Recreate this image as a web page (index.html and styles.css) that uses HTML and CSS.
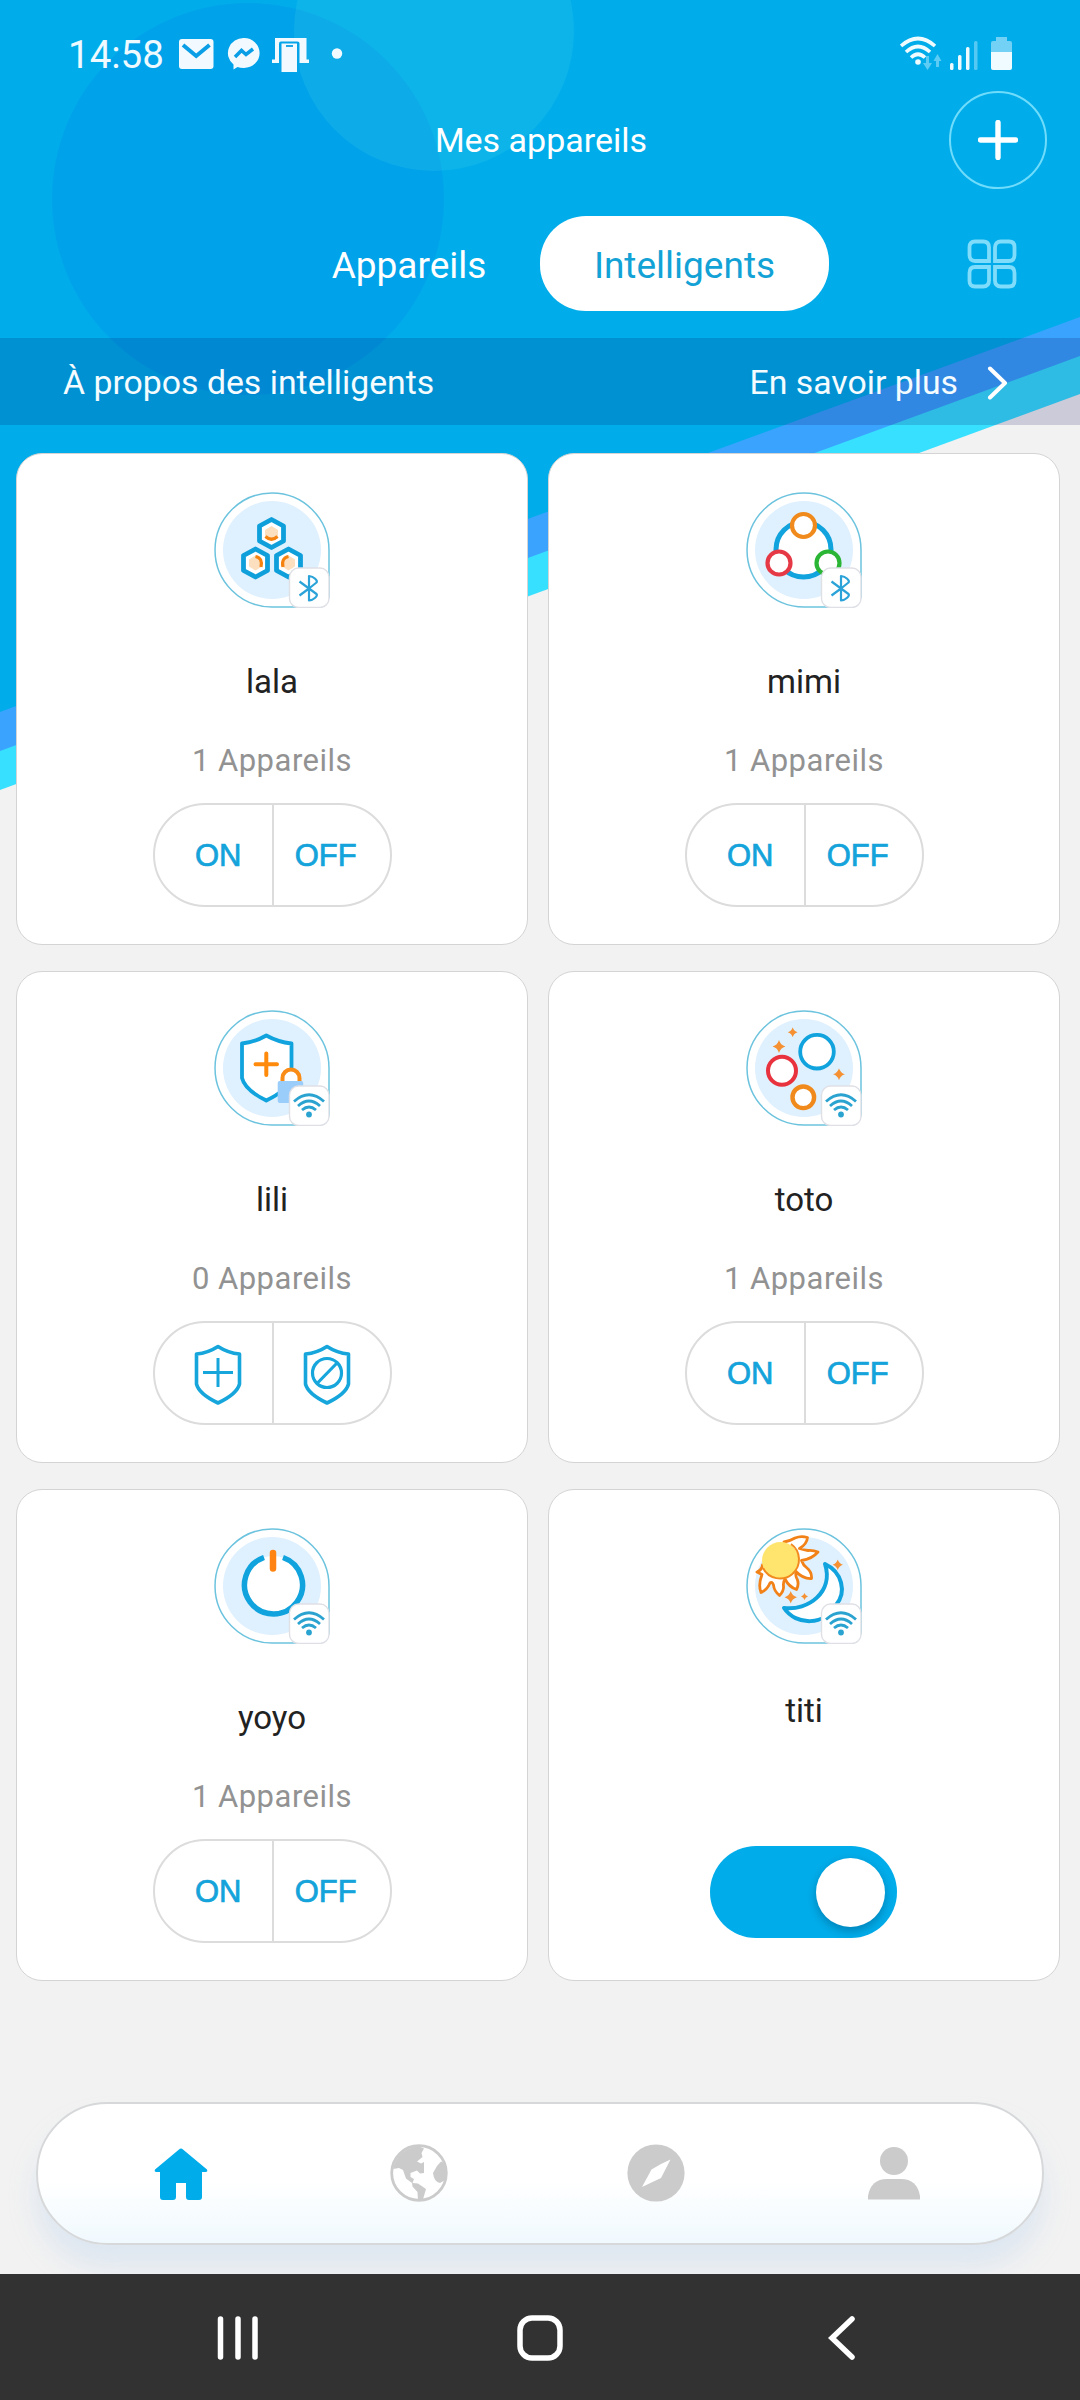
FILE: index.html
```html
<!DOCTYPE html>
<html lang="fr">
<head>
  <meta charset="UTF-8" />
  <meta name="viewport" content="width=device-width, initial-scale=1" />
  <title>Mes appareils</title>
  <link rel="stylesheet" href="styles.css">
</head>
<body>

  <!-- shared icons -->
  <svg class="sprite" aria-hidden="true">
    <symbol id="drop" viewBox="0 0 116 116">
      <path d="M58 1A57 57 0 0 0 58 115H103A12 12 0 0 0 115 103V58A57 57 0 0 0 58 1Z" fill="#fff" stroke="#6cc3de" stroke-width="1.5"/>
      <circle cx="58" cy="58" r="49" fill="#dff0fe"/>
    </symbol>
    <symbol id="badge-bt" viewBox="0 0 116 116">
      <rect x="75.5" y="76" width="39.5" height="39.5" rx="9" fill="#fff" stroke="#dfe0e6" stroke-width="1.4"/>
      <path d="M85.500 89.500L95 96.500L102.500 102C104 104 100 108 95 108.500V84C100 84.500 104 88.500 102.500 90.500L95 96.500L85.500 103.500" fill="none" stroke="#2ba3d8" stroke-width="2.2" stroke-linejoin="round"/>
    </symbol>
    <symbol id="badge-wifi" viewBox="0 0 116 116">
      <rect x="75.5" y="76" width="39.5" height="39.5" rx="9" fill="#fff" stroke="#dfe0e6" stroke-width="1.4"/>
      <g fill="none" stroke="#2ba3d0" stroke-width="2.8">
        <path d="M80 91.500Q95 78 110 91.500"/>
        <path d="M84 96Q95 86 106 96"/>
        <path d="M88 100Q95 94 102 100"/>
      </g>
      <circle cx="95" cy="104.500" r="2.900" fill="#2ba3d0"/>
    </symbol>
    <symbol id="hex" viewBox="-16 -17 32 34">
      <path d="M0-14L12-7.500V7.500L0 14L-12 7.500V-7.500Z" fill="#fff" stroke="#0f9fdb" stroke-width="4.800" stroke-linejoin="round"/>
    </symbol>
    <symbol id="star" viewBox="-6 -6 12 12">
      <path d="M0-6Q1.300-1.300 6 0Q1.300 1.300 0 6Q-1.300 1.300-6 0Q-1.300-1.300 0-6Z" fill="#f59132"/>
    </symbol>
    <symbol id="shield" viewBox="0 0 48 61">
      <path d="M24 2.500Q34 9 45.500 10V40Q43 50 24 59Q5 50 2.500 40V10Q14 9 24 2.500Z" fill="none" stroke="#16a6dc" stroke-width="3.600" stroke-linejoin="round"/>
    </symbol>
  </svg>

  <svg class="backdrop" viewBox="0 0 1080 800" aria-hidden="true">
    <path d="M0 0H1080V394L0 790Z" fill="#38e0ff"/>
    <path d="M0 0H1080V356L0 751Z" fill="#3aa3fe"/>
    <path d="M0 0H1080V317L0 712Z" fill="#00adea"/>
    <circle cx="248" cy="199" r="196" fill="#00a2ea"/>
    <circle cx="434" cy="31" r="140" fill="#2fc6ea" fill-opacity=".27"/>
  </svg>

  <div class="app">
    <header class="header">
      <div class="status-bar">
        <span class="time">14:58</span>
        <svg class="status-left" viewBox="0 0 166 36">
          <g fill="#f2faff">
            <rect x="0" y="2" width="34.500" height="30" rx="3"/>
            <path d="M4 8L17.200 19L30.500 8" fill="none" stroke="#0a9ee6" stroke-width="4"/>
            <path d="M65 1A15.600 15 0 0 1 65 31Q61 31 58.500 30L54.500 32.500V27.500A15.600 15 0 0 1 65 1Z"/>
            <path d="M56 20L62.500 13.500L67 17.500L74 12" fill="none" stroke="#0a9ee6" stroke-width="3.500"/>
            <path d="M96 1H127.500V24H96Z"/>
            <path d="M93 22.500H130V26H93Z"/>
            <rect x="100" y="4.500" width="20.500" height="31" rx="2" fill="#05a4e9"/>
            <rect x="102.500" y="6.500" width="15.500" height="28.500"/>
            <path d="M107 9H114" stroke="#0a9ee6" stroke-width="1.800"/>
            <circle cx="158" cy="16.500" r="5.200"/>
          </g>
        </svg>
        <svg class="status-right" viewBox="0 0 114 36">
          <g fill="none" stroke="#f0fbff" stroke-width="3.600">
            <path d="M1 10Q18 -5 35 10"/>
            <path d="M6 16Q18 5 30 16"/>
            <path d="M11 21.500Q18 15 25 21.500"/>
          </g>
          <circle cx="18" cy="26" r="2.800" fill="#f0fbff"/>
          <path d="M26 20H29V27H32L27.500 34L23 27H26ZM36 31H39V25H41.500L37.500 18L33.500 25H36Z" fill="#5cccf5"/>
          <g fill="#f0fbff">
            <rect x="50" y="27" width="3.500" height="7" rx="1.500"/>
            <rect x="58" y="19" width="3.500" height="15" rx="1.500"/>
            <rect x="66" y="11" width="3.500" height="23" rx="1.500"/>
            <rect x="74" y="5" width="3.500" height="29" rx="1.500" fill="#55c9f3"/>
          </g>
          <path d="M91 16V7Q91 5 93 5H96V1H107V5H110Q112 5 112 7V16Z" fill="#72d1f5"/>
          <path d="M91 16H112V32Q112 34 110 34H93Q91 34 91 32Z" fill="#f0fbff"/>
        </svg>
      </div>

      <div class="title-row">
        <h1>Mes appareils</h1>
        <button class="add-btn" aria-label="Ajouter">
          <svg viewBox="0 0 40 40"><path d="M20 2.500V37.500M2.500 20H37.500" stroke="#fff" stroke-width="5.400" stroke-linecap="round"/></svg>
        </button>
      </div>

      <div class="tabs">
        <span class="tab">Appareils</span>
        <span class="tab active">Intelligents</span>
        <svg class="grid-icon" viewBox="0 0 50 50">
          <g fill="none" stroke="#7fdcfa" stroke-width="3.800">
            <path d="M8 2.500H16Q22 2.500 22 8.500V22H8Q2.500 22 2.500 16V8Q2.500 2.500 8 2.500Z"/>
            <path d="M34 2.500H42Q47.500 2.500 47.500 8V16Q47.500 22 42 22H28V8.500Q28 2.500 34 2.500Z"/>
            <path d="M8 28H22V41.500Q22 47.500 16 47.500H8Q2.500 47.500 2.500 42V34Q2.500 28 8 28Z"/>
            <path d="M28 28H42Q47.500 28 47.500 34V42Q47.500 47.500 42 47.500H34Q28 47.500 28 41.500Z"/>
          </g>
        </svg>
      </div>
    </header>

    <div class="banner">
      <span>À propos des intelligents</span>
      <span class="more">En savoir plus
        <svg viewBox="0 0 22 34"><path d="M3 2.500L18 17L3 31.500" fill="none" stroke="#fff" stroke-width="4" stroke-linecap="round" stroke-linejoin="round"/></svg>
      </span>
    </div>

    <main class="cards">
      <section class="card">
        <svg class="card-icon" viewBox="0 0 116 116">
          <use href="#drop"/>
          <use href="#hex" x="41.500" y="24.500" width="32" height="34"/>
          <use href="#hex" x="25.500" y="54" width="32" height="34"/>
          <use href="#hex" x="58.500" y="54" width="32" height="34"/>
          <g fill="#fbdfbf">
            <path d="M57.500 34L64 38V45L57.500 49L51 45V38Z"/>
            <path d="M41.500 63.500L48 67.500V74.500L41.500 78.500L35 74.500V67.500Z"/>
            <path d="M74.500 63.500L81 67.500V74.500L74.500 78.500L68 74.500V67.500Z"/>
          </g>
          <g fill="none" stroke="#f5820f" stroke-width="3.200">
            <path d="M51.500 44.500Q57.500 50 63.500 44.500"/>
            <path d="M41.500 64.500Q49 66 47 75"/>
            <path d="M74.500 64.500Q67 66 69 75"/>
          </g>
          <use href="#badge-bt"/>
        </svg>
        <h2>lala</h2>
        <p>1 Appareils</p>
        <div class="switch"><span>ON</span><span>OFF</span></div>
      </section>

      <section class="card">
        <svg class="card-icon" viewBox="0 0 116 116">
          <use href="#drop"/>
          <circle cx="57.500" cy="57.500" r="27.500" fill="#fff" stroke="#10a3dd" stroke-width="5"/>
          <g fill="#fff" stroke-width="4.200">
            <circle cx="57.500" cy="33.500" r="11.500" stroke="#f08a1c"/>
            <circle cx="33" cy="71" r="11.500" stroke="#e63946"/>
            <circle cx="82" cy="71" r="11.500" stroke="#2bb534"/>
          </g>
          <use href="#badge-bt"/>
        </svg>
        <h2>mimi</h2>
        <p>1 Appareils</p>
        <div class="switch"><span>ON</span><span>OFF</span></div>
      </section>

      <section class="card">
        <svg class="card-icon" viewBox="0 0 116 116">
          <use href="#drop"/>
          <path d="M52.300 25.500Q64 32 77.500 33.500V68Q74 80 52.300 90.500Q31 80 28 68V33.500Q41 32 52.300 25.500Z" fill="#fff" stroke="#10a3dd" stroke-width="3.800" stroke-linejoin="round"/>
          <path d="M52.300 43.500V65M41.500 54.300H63" stroke="#ff8a0c" stroke-width="4" stroke-linecap="round"/>
          <path d="M68.500 73V68A8.500 8.500 0 0 1 85.500 68V73" fill="#fff" stroke="#f98b17" stroke-width="4"/>
          <rect x="63.700" y="71" width="25.500" height="22" rx="2" fill="#9bcdfb"/>
          <use href="#badge-wifi"/>
        </svg>
        <h2>lili</h2>
        <p>0 Appareils</p>
        <div class="switch shields">
          <span>
            <svg viewBox="0 0 48 61"><use href="#shield"/><path d="M24 14V43M9 28.500H39" stroke="#16a6dc" stroke-width="3"/></svg>
          </span>
          <span>
            <svg viewBox="0 0 48 61"><use href="#shield"/><g fill="none" stroke="#16a6dc" stroke-width="3.200"><circle cx="24" cy="29" r="14.500"/><path d="M14 39.500L34.500 18.500"/></g></svg>
          </span>
        </div>
      </section>

      <section class="card">
        <svg class="card-icon" viewBox="0 0 116 116">
          <use href="#drop"/>
          <g fill="#fff">
            <circle cx="71" cy="41.700" r="16.800" stroke="#10a3dd" stroke-width="3.800"/>
            <circle cx="36" cy="60.700" r="14" stroke="#e8333f" stroke-width="4"/>
            <circle cx="57.300" cy="87.300" r="10.800" stroke="#f08a1c" stroke-width="4.400"/>
          </g>
          <use href="#star" x="41.700" y="17.300" width="10" height="10"/>
          <use href="#star" x="26.500" y="30" width="13" height="13"/>
          <use href="#star" x="87" y="58.300" width="12" height="12"/>
          <use href="#badge-wifi"/>
        </svg>
        <h2>toto</h2>
        <p>1 Appareils</p>
        <div class="switch"><span>ON</span><span>OFF</span></div>
      </section>

      <section class="card">
        <svg class="card-icon" viewBox="0 0 116 116">
          <use href="#drop"/>
          <circle cx="59.300" cy="57" r="29" fill="#fff"/>
          <path d="M50 29.500A29 29 0 1 0 69 29.500" fill="none" stroke="#10a3dd" stroke-width="5.500"/>
          <path d="M59 25V40.500" stroke="#ff8414" stroke-width="6.500" stroke-linecap="round"/>
          <use href="#badge-wifi"/>
        </svg>
        <h2>yoyo</h2>
        <p>1 Appareils</p>
        <div class="switch"><span>ON</span><span>OFF</span></div>
      </section>

      <section class="card scene">
        <svg class="card-icon" viewBox="0 0 116 116">
          <use href="#drop"/>
          <path d="M38 14Q44 13 49 10Q55 7.500 61.500 9.500Q61 16 53.500 20.500Q58 22 62 22.500Q67 22 72 24Q66 31 55.500 32.500Q57 37 61 40Q66 44 65.500 50.500Q57 51 50 43.500Q49 48 51.500 52Q53 57 50.500 61.500Q43 59 39 51Q37 54 37.500 58Q38 63 33.500 67.500Q28 63 27.500 57Q26 53 24 55Q21 62 15 64.500Q12 57 16 46.500L11 44Q16 42 16.500 37" fill="#fff" stroke="#f28218" stroke-width="2.800" stroke-linejoin="round" stroke-linecap="round"/>
          <circle cx="34.500" cy="32.500" r="18.500" fill="#ffe56e"/>
          <path d="M45 16A19 19 0 1 1 17 40" fill="none" stroke="#f28a1e" stroke-width="2"/>
          <path d="M79 36C96 44 101 64 90 77C79 98 50 98 38 80C62 83 88 64 79 36Z" fill="#fff" stroke="#10a3dd" stroke-width="4" stroke-linejoin="round"/>
          <use href="#star" x="86.500" y="31.500" width="10.500" height="10.500"/>
          <use href="#star" x="38.500" y="63" width="12.500" height="12.500"/>
          <use href="#star" x="55" y="65" width="7" height="7"/>
          <use href="#badge-wifi"/>
        </svg>
        <h2>titi</h2>
        <div class="toggle"><i class="knob"></i></div>
      </section>
    </main>

    <nav class="bottom-nav">
      <span>
        <svg class="nav-icon" viewBox="0 0 58 58"><path d="M27 5.500Q29 3.500 31 5.500L55 25.500Q56 28 53.500 28H50V53Q50 56 47 56H37Q34 56 34 53V39H24V53Q24 56 21 56H11Q8 56 8 53V28H4.500Q2 28 3 25.500Z" fill="#00adea"/></svg>
      </span>
      <span>
        <svg class="nav-icon" viewBox="0 0 58 58">
          <circle cx="29" cy="29" r="27.300" fill="#fff" stroke="#cbcbcb" stroke-width="2.800"/>
          <path d="M3 25Q7 6 28 2L34 4.500L31.500 9L32.500 13L27 17.500L31 19.500L34 18V29L30 29.500L27 26.500L20.500 29L20.500 33L24 35L22.500 39L28 39.500L36 45L32.500 57H28L27.500 48L22.500 42.500L22 39L16 34.500L13 26L9 24Z" fill="#cbcbcb"/>
          <path d="M54 19L51 17.500L47 22L43 29Q44 38 50 39L55 36Q58 27 54 19Z" fill="#cbcbcb"/>
        </svg>
      </span>
      <span>
        <svg class="nav-icon" viewBox="0 0 58 58"><circle cx="29" cy="29" r="28.600" fill="#cbcbcb"/><path d="M43.500 15.500L34 34L24.500 38.500L15 43L24.500 25.500L34 20Z" fill="#fff"/></svg>
      </span>
      <span>
        <svg class="nav-icon" viewBox="0 0 58 58"><circle cx="29" cy="17" r="14" fill="#cbcbcb"/><path d="M3 55.500V52Q6 35 22 35H36Q52 35 55 52V55.500Z" fill="#cbcbcb"/></svg>
      </span>
    </nav>

    <footer class="system-bar">
      <svg viewBox="0 0 48 48"><path d="M6.500 5V43M24 5V43M41 5V43" stroke="#fff" stroke-width="5.500" stroke-linecap="round"/></svg>
      <svg viewBox="0 0 48 48"><rect x="4" y="4" width="40" height="40" rx="12" fill="none" stroke="#fff" stroke-width="5.500"/></svg>
      <svg viewBox="0 0 48 48"><path d="M34 5L14 24L34 43" fill="none" stroke="#fff" stroke-width="5.500" stroke-linecap="round"/></svg>
    </footer>
  </div>

</body>
</html>
```
FILE: styles.css
```css
* {
  box-sizing: border-box;
}
body {
  margin: 0;
  background-color: #f2f2f2;
  font-family: Roboto, sans-serif;
  color: #222;
}
svg {
  display: block;
}
.sprite {
  position: absolute;
  width: 0;
  height: 0;
}
.backdrop {
  position: absolute;
  top: 0;
  left: 0;
  width: 1080px;
  height: 800px;
  z-index: -1;
}
.app {
  display: flex;
  flex-direction: column;
  width: 1080px;
  height: 2400px;
  overflow: hidden;
}

/* header */
.header {
  height: 338px;
  color: #fff;
}
.status-bar {
  display: flex;
  align-items: flex-start;
  height: 91px;
  padding: 37px 66px 0 68px;
}
.time {
  width: 111px;
  font-size: 38.5px;
  line-height: 36px;
  color: #eefaff;
}
.status-left {
  width: 166px;
  height: 36px;
}
.status-right {
  width: 114px;
  height: 36px;
  margin-left: auto;
  margin-top: -1px;
}
.title-row {
  display: grid;
  grid-template-columns: 98px 1fr 98px;
  align-items: center;
  height: 98px;
  padding: 0 33px 0 35px;
}
.title-row h1 {
  grid-column: 2;
  margin: 0;
  font-size: 34px;
  font-weight: 400;
  text-align: center;
}
.add-btn {
  display: flex;
  align-items: center;
  justify-content: center;
  width: 98px;
  height: 98px;
  padding: 0;
  border: 2px solid #6fdcfb;
  border-radius: 50%;
  background: none;
}
.add-btn svg {
  width: 40px;
  height: 40px;
}
.tabs {
  display: flex;
  align-items: center;
  height: 95px;
  margin-top: 27px;
  padding: 0 63px 0 278px;
}
.tab {
  width: 262px;
  padding-top: 4px;
  font-size: 37px;
  line-height: 91px;
  text-align: center;
}
.tab.active {
  width: 289px;
  border-radius: 46px;
  background-color: #fff;
  color: #12a2d6;
}
.grid-icon {
  width: 50px;
  height: 50px;
  margin-left: auto;
}
.banner {
  display: flex;
  align-items: center;
  justify-content: space-between;
  height: 87px;
  padding: 2px 71px 0 63px;
  background-color: rgba(0, 0, 90, 0.16);
  color: #f4fcff;
  font-size: 33.8px;
}
.more {
  display: flex;
  align-items: center;
  gap: 29px;
}
.more svg {
  width: 22px;
  height: 34px;
}

/* cards */
.cards {
  display: grid;
  grid-template-columns: 512px 512px;
  gap: 26px 20px;
  padding: 28px 0 0 16px;
}
.card {
  display: flex;
  flex-direction: column;
  align-items: center;
  height: 492px;
  padding-top: 38px;
  border: 1px solid #d4d4d4;
  border-radius: 26px;
  background-color: #fff;
}
.card-icon {
  width: 116px;
  height: 116px;
}
.card h2 {
  margin: 54px 0 0;
  font-size: 33px;
  font-weight: 400;
  line-height: 40px;
}
.card p {
  margin: 40px 0 0;
  color: #929292;
  font-size: 31px;
  line-height: 38px;
  letter-spacing: 0.5px;
}
.switch {
  display: flex;
  width: 239px;
  height: 104px;
  margin-top: 23px;
  border: 2px solid #dcdcdc;
  border-radius: 52px;
}
.switch span {
  display: flex;
  align-items: center;
  justify-content: center;
  width: 116px;
  padding-top: 2px;
  color: #14a3da;
  font-family: "Liberation Sans", sans-serif;
  font-size: 31px;
  -webkit-text-stroke: 0.7px #14a3da;
}
.switch span:first-child {
  width: 120px;
  padding-left: 10px;
  border-right: 2px solid #dcdcdc;
}
.switch span:last-child {
  padding-right: 12px;
}
.shields span:last-child {
  padding-right: 10px;
}
.switch svg {
  width: 48px;
  height: 61px;
}
.scene h2 {
  margin-top: 47px;
}
.toggle {
  display: flex;
  align-items: center;
  justify-content: flex-end;
  width: 187px;
  height: 92px;
  margin: 115px 1px 0 0;
  padding-right: 12px;
  border-radius: 46px;
  background-color: #00adea;
}
.knob {
  width: 69px;
  height: 69px;
  border-radius: 50%;
  background-color: #fff;
  box-shadow: 0 4px 10px rgba(0, 50, 90, 0.35);
}

/* bottom bars */
.bottom-nav {
  display: flex;
  flex-shrink: 0;
  height: 143px;
  margin: auto 36px 29px;
  padding: 0 29px 2px 24px;
  border: 2px solid #d6d8da;
  border-radius: 72px;
  background: linear-gradient(#fff 55%, #f0f9fe);
  box-shadow: 0 22px 26px rgba(190, 213, 238, 0.38);
}
.bottom-nav span {
  display: flex;
  flex: 1;
  align-items: center;
  justify-content: center;
}
.nav-icon {
  width: 58px;
  height: 58px;
}
.system-bar {
  position: relative;
  display: flex;
  flex-shrink: 0;
  align-items: center;
  justify-content: center;
  gap: 254px;
  height: 126px;
  padding-top: 2px;
  background-color: #323232;
}
.system-bar svg {
  width: 48px;
  height: 48px;
}
```
